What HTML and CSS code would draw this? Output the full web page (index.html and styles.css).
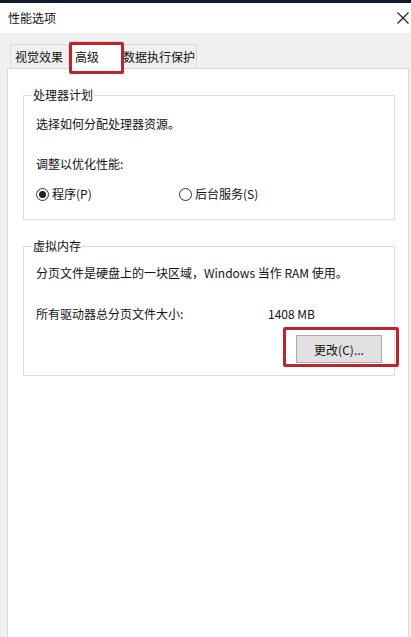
FILE: index.html
```html
<!DOCTYPE html>
<html lang="zh-CN">
<head>
<meta charset="utf-8">
<title>性能选项</title>
<link rel="stylesheet" href="styles.css">
</head>
<body>
<div class="window">
  <div class="topbar"></div>
  <div class="titlebar">
    <span class="title">性能选项</span>
    <svg class="close" width="12" height="12" viewBox="0 0 12 12"><path d="M0.5 0.5L11.5 11.5M11.5 0.5L0.5 11.5" stroke="#1a1a1a" stroke-width="1.1" fill="none"/></svg>
  </div>
  <div class="content">
    <div class="tabs">
      <div class="tab">视觉效果</div>
      <div class="tab selected">高级</div>
      <div class="tab">数据执行保护</div>
    </div>
    <div class="panel">
      <fieldset class="group first">
        <legend>处理器计划</legend>
        <div class="group-body cpu">
          <p class="line">选择如何分配处理器资源。</p>
          <p class="line adjust">调整以优化性能:</p>
          <div class="radios">
            <label class="radio"><span class="dot checked"></span>程序(P)</label>
            <label class="radio second"><span class="dot"></span>后台服务(S)</label>
          </div>
        </div>
      </fieldset>
      <fieldset class="group">
        <legend>虚拟内存</legend>
        <div class="group-body vm">
          <p class="line">分页文件是硬盘上的一块区域，Windows 当作 RAM 使用。</p>
          <div class="size-row">
            <span class="size-label">所有驱动器总分页文件大小:</span>
            <span class="size-value">1408 MB</span>
          </div>
          <div class="btn-row">
            <button class="btn">更改(C)...</button>
          </div>
        </div>
      </fieldset>
    </div>
  </div>
  <div class="mark mark-tab"></div>
  <div class="mark mark-btn"></div>
</div>
</body>
</html>
```

FILE: styles.css
```css
html, body {
  margin: 0;
  padding: 0;
}
body {
  width: 411px;
  height: 637px;
  overflow: hidden;
  background: #f0f0f0;
  font-family: "Noto Sans CJK SC", "Noto Sans", sans-serif;
  font-size: 12px;
  line-height: 16px;
  color: #111;
}
.window {
  position: relative;
  width: 411px;
  height: 637px;
  overflow: hidden;
}
.topbar {
  height: 3px;
  background: #0f1a2c;
}
.titlebar {
  height: 30px;
  background: #ffffff;
  display: flex;
  align-items: center;
  justify-content: space-between;
  padding: 0 2px 0 8px;
}
.title {
  font-size: 12px;
  color: #111;
  padding-bottom: 1px;
}
.close {
  width: 12px;
  height: 12px;
}
.content {
  padding: 7px 2px 0 7px;
}
.tabs {
  display: flex;
  align-items: flex-end;
  padding-left: 3px;
  height: 28px;
}
.tab {
  height: 23px;
  line-height: 23px;
  padding: 0 4px;
  background: #f0f0f0;
  border: 1px solid #d9d9d9;
  border-bottom: none;
  color: #111;
  white-space: nowrap;
}
.tab:first-child {
  width: 49px;
}
.tab.selected {
  height: 25px;
  line-height: 25px;
  background: #ffffff;
  width: 43px;
  padding: 2px 3px 0 5px;
  margin-bottom: -1px;
  position: relative;
  z-index: 1;
}
.tab:last-child {
  padding: 0 1px;
  border-left: none;
}
.panel {
  background: #ffffff;
  border: 1px solid #d9d9d9;
  height: 620px;
  padding: 18px 13px 0 15px;
}
.group {
  margin: 0;
  padding: 0;
  border: 1px solid #dcdcdc;
  min-width: 0;
}
.group + .group {
  margin-top: 18px;
}
.group legend {
  margin-left: 8px;
  padding: 0 1px;
  line-height: 16px;
  color: #111;
}
.group-body {
  padding-left: 12px;
}
.line {
  margin: 0;
  line-height: 16px;
}
.cpu {
  padding-top: 13px;
  padding-bottom: 17px;
}
.adjust {
  margin-top: 24px;
}
.radios {
  display: flex;
  margin-top: 14px;
  height: 16px;
}
.radio {
  display: flex;
  align-items: center;
  gap: 3px;
  width: 143px;
}
.radio.second {
  width: auto;
}
.dot {
  width: 11px;
  height: 11px;
  border: 1px solid #333;
  border-radius: 50%;
  box-sizing: content-box;
  display: flex;
  align-items: center;
  justify-content: center;
  background: #fff;
}
.dot.checked::after {
  content: "";
  width: 7px;
  height: 7px;
  border-radius: 50%;
  background: #222;
}
.vm {
  padding-top: 11px;
  padding-bottom: 12px;
}
.size-row {
  display: flex;
  margin-top: 25px;
}
.size-label {
  width: 232px;
}
.btn-row {
  display: flex;
  justify-content: flex-end;
  margin-top: 13px;
  padding-right: 12px;
}
.btn {
  width: 86px;
  height: 28px;
  background: #e1e1e1;
  border: 1px solid #adadad;
  font-family: inherit;
  font-size: 12px;
  color: #111;
  padding: 0;
  margin: 0;
}
.mark {
  position: absolute;
  border: 3px solid #c1232b;
  border-radius: 2px;
  box-sizing: border-box;
  z-index: 5;
}
.mark-tab {
  left: 69px;
  top: 42px;
  width: 55px;
  height: 32px;
}
.mark-btn {
  left: 283px;
  top: 327px;
  width: 116px;
  height: 40px;
}
```
